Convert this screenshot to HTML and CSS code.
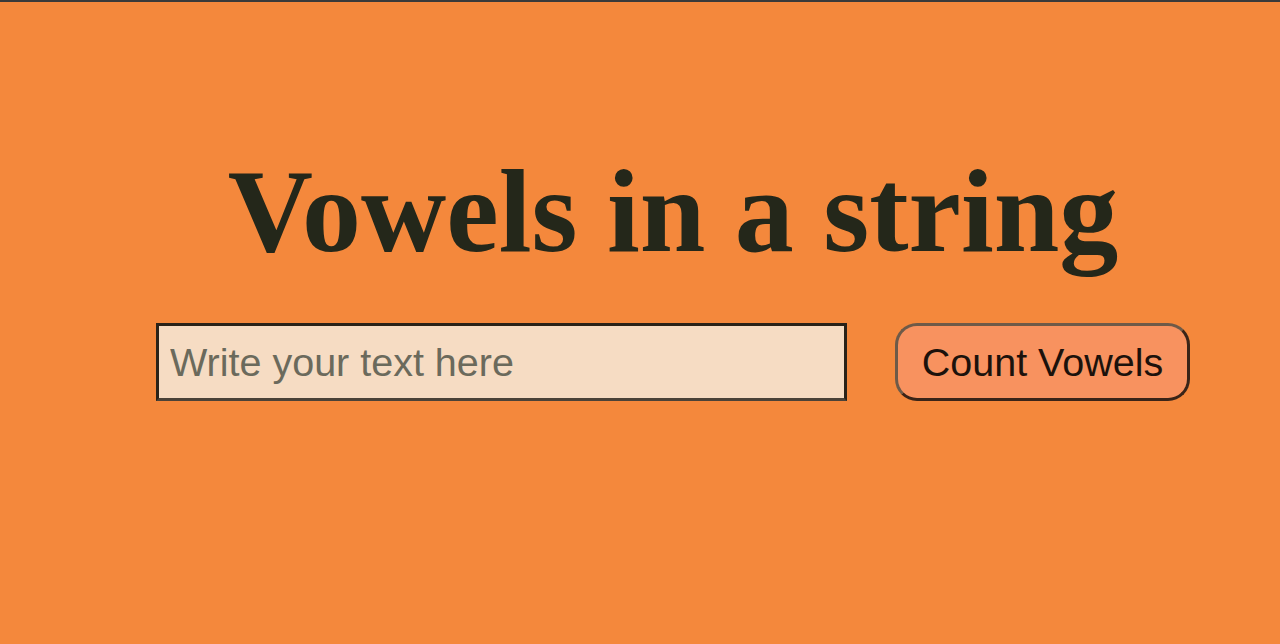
FILE: index.html
```html
<!DOCTYPE html>
<html>
<head>
<meta charset="utf-8">
<link rel="stylesheet" href="styles.css">
</head>
<body>
<main class="app">
  <h1 class="title">Vowels in a string</h1>
  <div class="controls">
    <input class="text-input" type="text" placeholder="Write your text here">
    <button class="count-btn">Count Vowels</button>
  </div>
</main>
</body>
</html>
```
FILE: styles.css
```css
html, body {
  margin: 0;
  padding: 0;
  height: 100%;
}
body {
  background: #f4883c;
  border-top: 2px solid #3a3a3a;
  box-sizing: border-box;
  overflow: hidden;
}
.app {
  display: flex;
  flex-direction: column;
  align-items: center;
  padding-left: 66px;
  padding-top: 151px;
}
.title {
  margin: 0;
  font-family: "Liberation Serif", "Times New Roman", serif;
  font-weight: bold;
  font-size: 118px;
  line-height: 118px;
  color: #24271a;
}
.controls {
  display: flex;
  align-items: center;
  gap: 48px;
  margin-top: 52px;
}
.text-input {
  box-sizing: border-box;
  width: 691px;
  height: 78px;
  border: 3px solid #2a2218;
  border-bottom-color: #4a4238;
  background: #f6dcc3;
  font-family: "Liberation Sans", Arial, sans-serif;
  font-size: 39.5px;
  padding: 0 11px;
  color: #333;
  outline: none;
}
.text-input::placeholder {
  color: #6b6a5c;
}
.count-btn {
  box-sizing: border-box;
  width: 295px;
  height: 78px;
  border: 3px solid #3a2418;
  border-top-color: #6e5a48;
  border-left-color: #6e5a48;
  border-radius: 22px;
  background: #f8925f;
  font-family: "Liberation Sans", Arial, sans-serif;
  font-size: 39.5px;
  color: #1c120c;
  padding: 0;
}
```
